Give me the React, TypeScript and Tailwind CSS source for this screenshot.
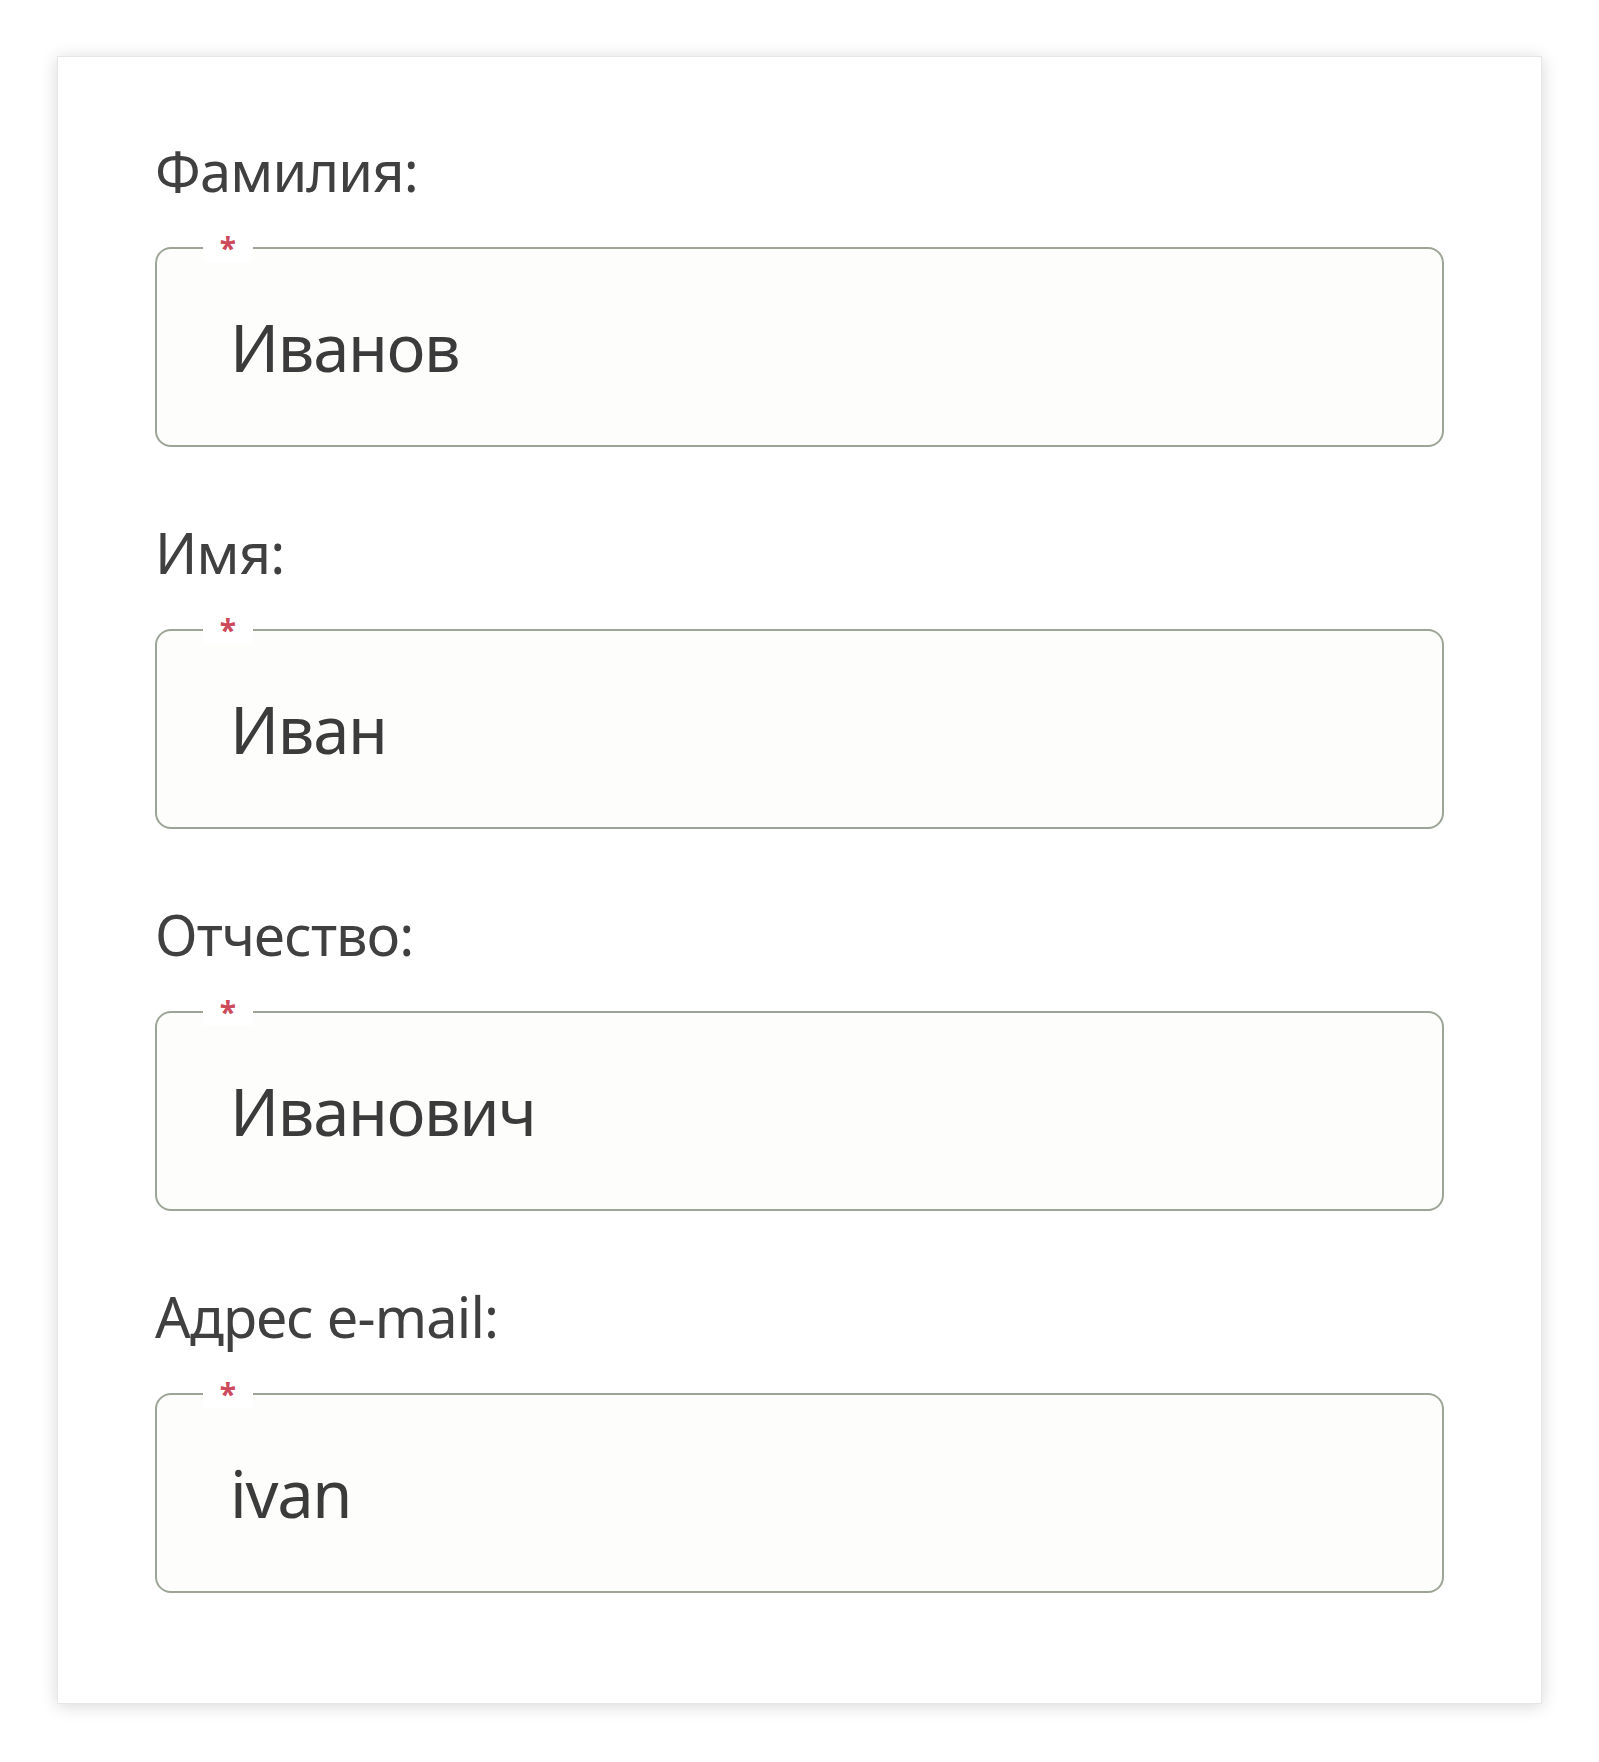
const fields = [
  { label: "Фамилия:", value: "Иванов" },
  { label: "Имя:", value: "Иван" },
  { label: "Отчество:", value: "Иванович" },
  { label: "Адрес e-mail:", value: "ivan" },
];

function Field({ label, value }: { label: string; value: string }) {
  return (
    <div className="flex flex-col">
      <label className="text-[56px] leading-[64px] tracking-[-0.015em] text-[#404040]">
        {label}
      </label>
      <div className="relative mt-[45px]">
        <span className="absolute -top-[13px] left-[48px] flex h-[28px] w-[50px] items-center justify-center bg-white text-[30px] font-bold leading-none text-[#cc4a5c]">
          *
        </span>
        <input
          readOnly
          value={value}
          className="h-[200px] w-full rounded-[16px] border-[2.5px] border-[#9da597] bg-[#fdfefb] pl-[73px] text-[65px] tracking-[-0.02em] text-[#3b3b3b] outline-none"
        />
      </div>
    </div>
  );
}

export default function App() {
  return (
    <div className="min-h-screen bg-white px-[57px] pt-[56px] font-['Noto_Sans',sans-serif]">
      <div className="flex flex-col gap-[73px] border border-[#e6e6e6] bg-white px-[97px] pb-[110px] pt-[81px] shadow-[0_2px_16px_rgba(0,0,0,0.16)]">
        {fields.map((f) => (
          <Field key={f.label} label={f.label} value={f.value} />
        ))}
      </div>
    </div>
  );
}
